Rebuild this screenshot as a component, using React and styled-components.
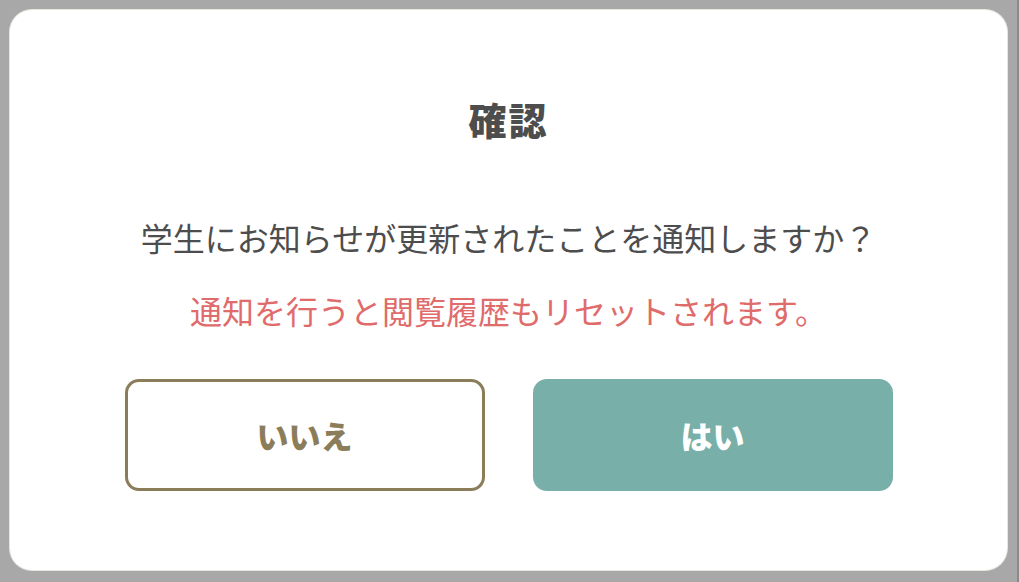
import React from "react";
import styled, { createGlobalStyle } from "styled-components";

const Global = createGlobalStyle`
  html, body { margin: 0; padding: 0; }
  body {
    background: #a8a8a8;
    font-family: "Noto Sans CJK JP", "Noto Sans", sans-serif;
  }
`;

const Screen = styled.div`
  width: 1019px;
  height: 582px;
  box-sizing: border-box;
  padding: 10px 10px 12px 10px;
  background: #a8a8a8;
  border-right: 2px solid #8a8a8a;
  display: flex;
`;

const Dialog = styled.div`
  flex: 1;
  background: #ffffff;
  border-radius: 22px;
  box-shadow: 0 0 0 1px #e6e6de;
  display: flex;
  flex-direction: column;
  align-items: center;
  padding-top: 81px;
  box-sizing: border-box;
`;

const Title = styled.h1`
  margin: 0;
  font-size: 38px;
  line-height: 56px;
  font-weight: 900;
  color: #4d4d4d;
  letter-spacing: 2px;
`;

const Message = styled.p`
  margin: ${(p) => p.$mt}px 0 0 0;
  font-size: 32px;
  line-height: 44px;
  font-weight: 400;
  color: ${(p) => p.$color};
`;

const Actions = styled.div`
  display: flex;
  gap: 48px;
  margin-top: 47px;
`;

const Button = styled.button`
  width: 360px;
  height: 112px;
  box-sizing: border-box;
  border-radius: 14px;
  font-family: inherit;
  font-size: 32px;
  font-weight: 900;
  cursor: pointer;
  border: 3px solid ${(p) => (p.$primary ? "#78afa8" : "#8b7d5a")};
  background: ${(p) => (p.$primary ? "#78afa8" : "#ffffff")};
  color: ${(p) => (p.$primary ? "#ffffff" : "#8b7d5a")};
`;

export default function App() {
  return (
    <>
      <Global />
      <Screen>
        <Dialog>
          <Title>確認</Title>
          <Message $mt={68} $color="#4d4d4d">
            学生にお知らせが更新されたことを通知しますか？
          </Message>
          <Message $mt={29} $color="#df6b6b">
            通知を行うと閲覧履歴もリセットされます。
          </Message>
          <Actions>
            <Button>いいえ</Button>
            <Button $primary>はい</Button>
          </Actions>
        </Dialog>
      </Screen>
    </>
  );
}
